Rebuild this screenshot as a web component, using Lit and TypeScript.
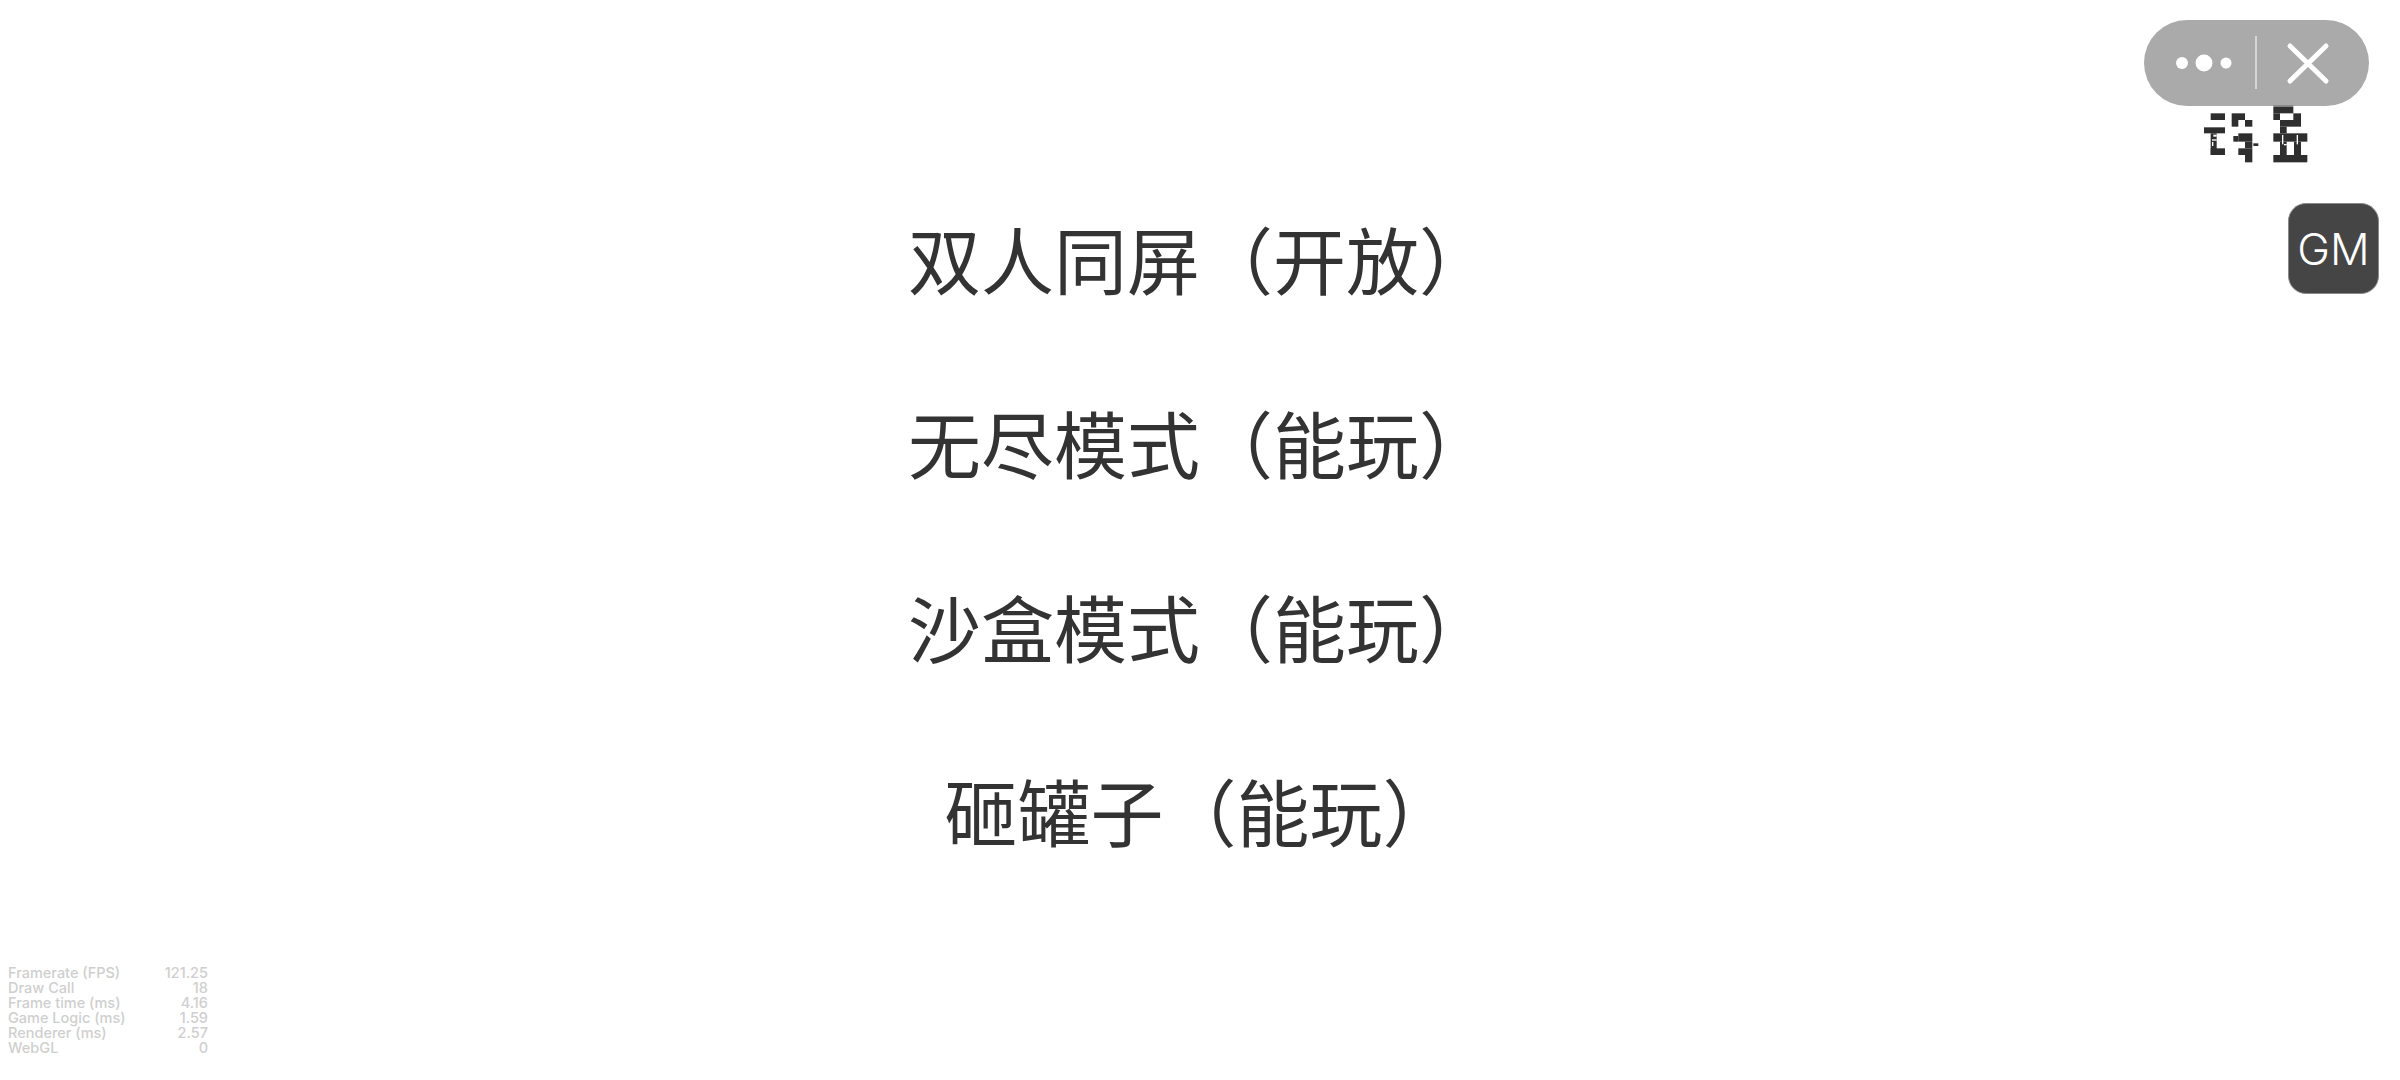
import { LitElement, html, css, svg } from "lit";
import { customElement } from "lit/decorators.js";

const MODES = ["双人同屏（开放）", "无尽模式（能玩）", "沙盒模式（能玩）", "砸罐子（能玩）"];
const STATS: [string, string][] = [
  ["Framerate (FPS)", "121.25"],
  ["Draw Call", "18"],
  ["Frame time (ms)", "4.16"],
  ["Game Logic (ms)", "1.59"],
  ["Renderer (ms)", "2.57"],
  ["WebGL", "0"],
];
// Corrupted bitmap label under the capsule: [x, y, w, h] in 3x pixels.
const DARK: number[][] = [
  [62, 40, 43, 20], [42, 82, 63, 18], [62, 100, 18, 65], [62, 145, 43, 20],
  [125, 40, 40, 20], [125, 60, 20, 20], [165, 60, 22, 20],
  [130, 108, 15, 17], [145, 100, 42, 25], [165, 125, 22, 20], [145, 145, 42, 20], [165, 165, 22, 22],
  [190, 130, 15, 8],
  [250, 20, 60, 20], [250, 40, 20, 20], [310, 40, 23, 20], [270, 60, 63, 20], [270, 80, 20, 20],
  [250, 100, 102, 25], [270, 125, 20, 40], [312, 125, 21, 40], [250, 165, 102, 22],
];
const LIGHT: number[][] = [
  [70, 104, 10, 6], [66, 118, 14, 4], [66, 126, 4, 12],
  [276, 105, 4, 28], [282, 132, 8, 4], [320, 105, 4, 28],
];

@customElement("app-root")
export class AppRoot extends LitElement {
  static styles = css`
    :host {
      display: block;
      position: relative;
      width: 2400px;
      height: 1080px;
      overflow: hidden;
      background: #fff;
      font-family: "Noto Sans CJK SC", "Noto Sans", sans-serif;
    }
    .modes {
      display: flex;
      flex-direction: column;
      align-items: center;
      padding-top: 165px;
    }
    .mode {
      font-size: 73px;
      line-height: 184px;
      font-weight: 400;
      color: #333;
      white-space: nowrap;
    }
    .capsule {
      position: absolute;
      left: 2144px;
      top: 20px;
      width: 225px;
      height: 86px;
      border-radius: 43px;
      background: #aaaaaa;
    }
    .capsule svg { display: block; }
    .garbled {
      position: absolute;
      left: 2190px;
      top: 100px;
      width: 140px;
      height: 70px;
    }
    .gm {
      position: absolute;
      left: 2288px;
      top: 203px;
      width: 91px;
      height: 91px;
      box-sizing: border-box;
      border-radius: 18px;
      border: 1px solid #8a8a8a;
      background: #454545;
      color: #fff;
      display: flex;
      align-items: center;
      justify-content: center;
      font-family: Inter, "Open Sans", sans-serif;
      font-weight: 350;
      font-size: 44px;
    }
    .stats {
      position: absolute;
      left: 8px;
      top: 965px;
      width: 200px;
      display: grid;
      grid-template-columns: 1fr auto;
      font-family: Inter, Roboto, sans-serif;
      font-size: 14.5px;
      line-height: 15px;
      color: #cfcfcf;
      font-weight: 500;
    }
    .val { text-align: right; }
  `;

  render() {
    return html`
      <div class="modes">
        ${MODES.map((m) => html`<div class="mode">${m}</div>`)}
      </div>
      <div class="capsule">
        <svg width="225" height="86" viewBox="0 0 225 86">
          <circle cx="38" cy="43" r="6" fill="#fff" />
          <circle cx="60" cy="43" r="8.5" fill="#fff" />
          <circle cx="82" cy="43" r="5.5" fill="#fff" />
          <rect x="111" y="16" width="2" height="53" fill="#d6d6d6" />
          <path d="M146 26 L182 61 M182 26 L146 61" stroke="#fff" stroke-width="5" stroke-linecap="round" fill="none" />
        </svg>
      </div>
      <svg class="garbled" viewBox="0 0 420 210">
        <rect x="250" y="15" width="60" height="5" fill="#8a8a8a" />
        ${DARK.map(([x, y, w, h]) => svg`<rect x=${x} y=${y} width=${w} height=${h} fill="#2e2e2e" />`)}
        ${LIGHT.map(([x, y, w, h]) => svg`<rect x=${x} y=${y} width=${w} height=${h} fill="#fff" />`)}
      </svg>
      <div class="gm">GM</div>
      <div class="stats">
        ${STATS.map(([k, v]) => html`<div>${k}</div><div class="val">${v}</div>`)}
      </div>
    `;
  }
}
